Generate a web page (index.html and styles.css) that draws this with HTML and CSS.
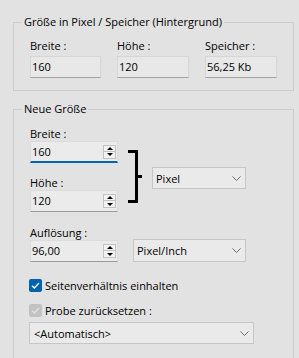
FILE: index.html
```html
<!DOCTYPE html>
<html>

<head>
    <meta name="viewport" content="width=device-width, initial-scale=1">
    <link rel="stylesheet" href="styles.css">
</head>

<body>

    <fieldset class="group group-info">
        <legend>Größe in Pixel / Speicher (Hintergrund)</legend>
        <div class="info-grid">
            <div class="info-item">
                <label class="info-label">Breite :</label>
                <div class="readonly">160</div>
            </div>
            <div class="info-item">
                <label class="info-label">Höhe :</label>
                <div class="readonly">120</div>
            </div>
            <div class="info-item">
                <label class="info-label">Speicher :</label>
                <div class="readonly">56,25 Kb</div>
            </div>
        </div>
    </fieldset>

    <fieldset class="group group-size">
        <legend>Neue Größe</legend>

        <div class="size-row">
            <div class="size-fields">
                <label class="field-label">Breite :</label>
                <div class="spin focused">
                    <span class="spin-value">160</span>
                    <div class="spin-buttons">
                        <span class="spin-btn up"></span>
                        <span class="spin-btn down"></span>
                    </div>
                </div>

                <label class="field-label gap">Höhe :</label>
                <div class="spin">
                    <span class="spin-value">120</span>
                    <div class="spin-buttons">
                        <span class="spin-btn up"></span>
                        <span class="spin-btn down"></span>
                    </div>
                </div>
            </div>

            <div class="bracket"></div>

            <div class="select select-unit">
                <span>Pixel</span>
                <svg class="chevron" width="9" height="5" viewBox="0 0 9 5"><path d="M0.5 0.5 L4.5 4.5 L8.5 0.5" fill="none" stroke="#6b6b6b" stroke-width="1"/></svg>
            </div>
        </div>

        <label class="field-label res-label">Auflösung :</label>
        <div class="res-row">
            <div class="spin">
                <span class="spin-value">96,00</span>
                <div class="spin-buttons">
                    <span class="spin-btn up"></span>
                    <span class="spin-btn down"></span>
                </div>
            </div>
            <div class="select select-res">
                <span>Pixel/Inch</span>
                <svg class="chevron" width="9" height="5" viewBox="0 0 9 5"><path d="M0.5 0.5 L4.5 4.5 L8.5 0.5" fill="none" stroke="#6b6b6b" stroke-width="1"/></svg>
            </div>
        </div>

        <div class="check-row first">
            <span class="checkbox">
                <svg width="13" height="13" viewBox="0 0 13 13"><path d="M3 6.8 L5.3 9 L10 4" fill="none" stroke="#ffffff" stroke-width="1.3"/></svg>
            </span>
            <span>Seitenverhältnis einhalten</span>
        </div>

        <div class="check-row disabled">
            <span class="checkbox">
                <svg width="13" height="13" viewBox="0 0 13 13"><path d="M3 6.8 L5.3 9 L10 4" fill="none" stroke="#e2e2e2" stroke-width="1.3"/></svg>
            </span>
            <span>Probe zurücksetzen :</span>
        </div>

        <div class="select select-auto">
            <span>&lt;Automatisch&gt;</span>
            <svg class="chevron" width="9" height="5" viewBox="0 0 9 5"><path d="M0.5 0.5 L4.5 4.5 L8.5 0.5" fill="none" stroke="#6b6b6b" stroke-width="1"/></svg>
        </div>
    </fieldset>

</body>

</html>
```

FILE: styles.css
```css
html {
    overflow: hidden;
}

body {
    margin: 0;
    background-color: #e2e2e2;
    font-family: "Open Sans", "Noto Sans", sans-serif;
    font-size: 11px;
    color: #000;
}

label {
    display: block;
}

.group {
    box-sizing: border-box;
    width: 281px;
    margin: 0 0 0 13px;
    padding: 0;
    border: 1px solid #cccccc;
    min-inline-size: 0;
}

/* legend sits inside the padding, pull it back to the frame corner */
.group legend {
    margin-left: -8px;
    padding: 0 2px;
    line-height: 16px;
}

.group-info {
    margin-top: 14px;
    padding: 9px 0 12px 16px;
}

.group-size {
    margin-top: 10px;
    padding: 10px 0 30px 16px;
}

/* info block */
.info-grid {
    display: grid;
    grid-template-columns: 71px 72px 72px;
    column-gap: 16px;
}

.info-label {
    line-height: 14px;
    margin-bottom: 3px;
}

.readonly {
    box-sizing: border-box;
    height: 22px;
    padding-left: 1px;
    line-height: 20px;
    background-color: #e8e8e8;
    border: 1px solid #d6d6d6;
    border-bottom-color: #a2a2a2;
}

/* resize block */
.field-label {
    line-height: 14px;
}

.field-label.gap {
    margin-top: 13px;
}

.size-row {
    display: flex;
    align-items: flex-start;
}

.size-fields {
    width: 88px;
}

.spin {
    box-sizing: border-box;
    width: 88px;
    height: 22px;
    padding-left: 1px;
    display: flex;
    align-items: center;
    background-color: #ebebeb;
    border: 1px solid #dcdcdc;
    border-bottom-color: #9c9c9c;
}

.spin.focused {
    border-bottom: 2px solid #0063b1;
}

.spin-value {
    flex: 1;
    line-height: 18px;
}

.spin-buttons {
    display: flex;
    flex-direction: column;
    margin-right: 1px;
}

.spin-btn {
    box-sizing: border-box;
    width: 13px;
    height: 7px;
    display: flex;
    align-items: center;
    justify-content: center;
    background-color: #f2f2f2;
    border: 1px solid #c2c2c2;
}

.spin-btn.down {
    border-top: none;
}

.spin-btn::before {
    content: "";
    border-left: 3px solid transparent;
    border-right: 3px solid transparent;
}

.spin-btn.up::before {
    border-bottom: 3px solid #000;
}

.spin-btn.down::before {
    border-top: 3px solid #000;
}

.bracket {
    position: relative;
    box-sizing: border-box;
    width: 10px;
    height: 53px;
    margin: 23px 0 0 10px;
    border: 3px solid #000;
    border-left: none;
}

.bracket::after {
    content: "";
    position: absolute;
    left: calc(100% + 3px);
    top: calc(50% - 1.5px);
    width: 4px;
    height: 3px;
    background-color: #000;
}

.select {
    box-sizing: border-box;
    height: 22px;
    padding: 0 4px 0 3px;
    display: flex;
    align-items: center;
    justify-content: space-between;
    background-color: #eaeaea;
    border: 1px solid #c6c6c6;
}

.select-unit {
    width: 94px;
    margin: 40px 0 0 14px;
}

.res-label {
    margin-top: 14px;
}

.res-row {
    display: flex;
    align-items: flex-start;
}

.select-res {
    width: 113px;
    height: 23px;
    margin: -1px 0 0 15px;
}

.check-row {
    height: 17px;
    margin: 8px 0 0 -1px;
    display: flex;
    align-items: center;
    gap: 3px;
}

.check-row.first {
    margin-top: 15px;
}

.checkbox {
    width: 13px;
    height: 13px;
    border-radius: 2px;
    background-color: #0063b1;
}

.checkbox svg {
    display: block;
}

.check-row.disabled .checkbox {
    background-color: #c2c2c2;
}

.select-auto {
    width: 225px;
    margin: 3px 0 0 -1px;
    padding-left: 4px;
}
```
